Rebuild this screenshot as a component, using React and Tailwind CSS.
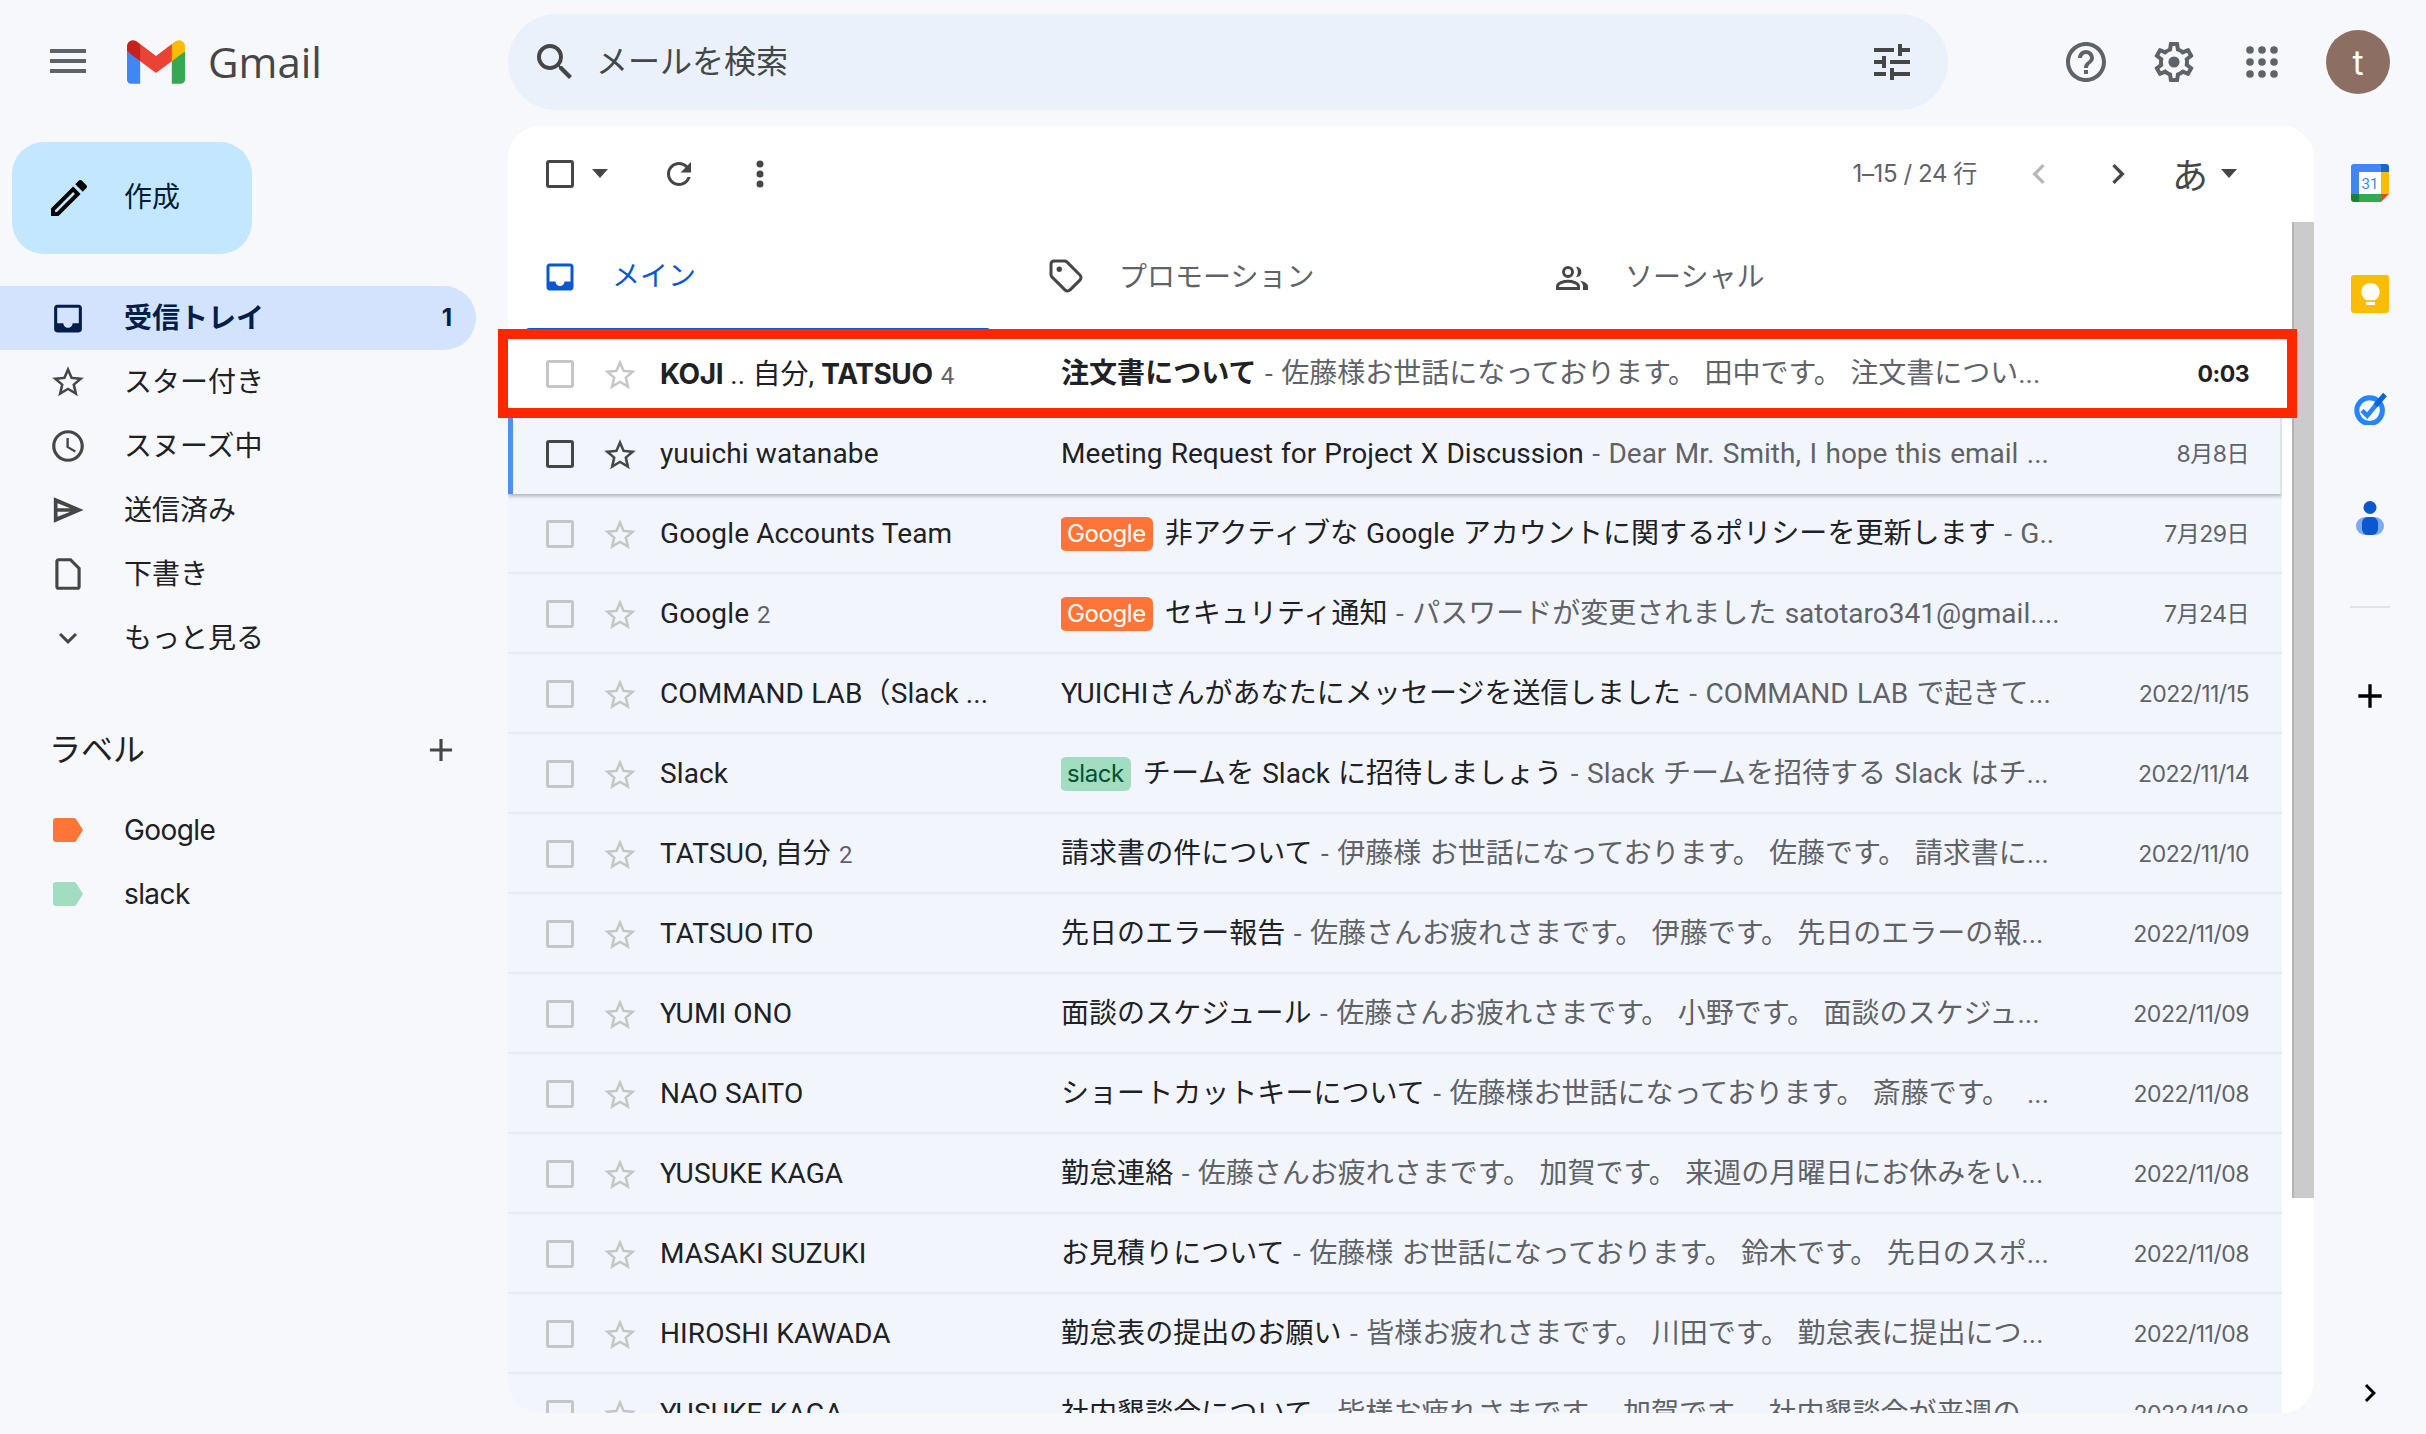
import React from "react";

const paths = {
  menu: "M3 18h18v-2H3v2zm0-5h18v-2H3v2zm0-7v2h18V6H3z",
  search: "M15.5 14h-.79l-.28-.27A6.471 6.471 0 0 0 16 9.5 6.5 6.5 0 1 0 9.5 16c1.61 0 3.09-.59 4.23-1.57l.27.28v.79l5 4.99L20.49 19l-4.99-5zm-6 0C7.01 14 5 11.99 5 9.5S7.01 5 9.5 5 14 7.01 14 9.5 11.99 14 9.5 14z",
  tune: "M3 17v2h6v-2H3zM3 5v2h10V5H3zm10 16v-2h8v-2h-8v-2h-2v6h2zM7 9v2H3v2h4v2h2V9H7zm14 4v-2H11v2h10zm-6-4h2V7h4V5h-4V3h-2v6z",
  help: "M11 18h2v-2h-2v2zm1-16C6.48 2 2 6.48 2 12s4.48 10 10 10 10-4.48 10-10S17.52 2 12 2zm0 18c-4.41 0-8-3.59-8-8s3.59-8 8-8 8 3.59 8 8-3.59 8-8 8zm0-14c-2.21 0-4 1.79-4 4h2c0-1.1.9-2 2-2s2 .9 2 2c0 2-3 1.75-3 5h2c0-2.25 3-2.5 3-5 0-2.21-1.79-4-4-4z",
  gear: "M19.43 12.98c.04-.32.07-.64.07-.98 0-.34-.03-.66-.07-.98l2.11-1.65c.19-.15.24-.42.12-.64l-2-3.46c-.09-.16-.26-.25-.44-.25-.06 0-.12.01-.17.03l-2.49 1c-.52-.4-1.08-.73-1.69-.98l-.38-2.65C14.46 2.18 14.25 2 14 2h-4c-.25 0-.46.18-.49.42l-.38 2.65c-.61.25-1.17.59-1.69.98l-2.49-1c-.06-.02-.12-.03-.18-.03-.17 0-.34.09-.43.25l-2 3.46c-.13.22-.07.49.12.64l2.11 1.65c-.04.32-.07.65-.07.98 0 .33.03.66.07.98l-2.11 1.65c-.19.15-.24.42-.12.64l2 3.46c.09.16.26.25.44.25.06 0 .12-.01.17-.03l2.49-1c.52.4 1.08.73 1.69.98l.38 2.65c.03.24.24.42.49.42h4c.25 0 .46-.18.49-.42l.38-2.65c.61-.25 1.17-.59 1.69-.98l2.49 1c.06.02.12.03.18.03.17 0 .34-.09.43-.25l2-3.46c.12-.22.07-.49-.12-.64l-2.11-1.65zm-1.98-1.71c.04.31.05.52.05.73 0 .21-.02.43-.05.73l-.14 1.13.89.7 1.08.84-.7 1.21-1.27-.51-1.04-.42-.9.68c-.43.32-.84.56-1.25.73l-1.06.43-.16 1.13-.2 1.35h-1.4l-.19-1.35-.16-1.13-1.06-.43c-.43-.18-.83-.41-1.23-.71l-.91-.7-1.06.43-1.27.51-.7-1.21 1.08-.84.89-.7-.14-1.13c-.03-.31-.05-.54-.05-.74s.02-.43.05-.73l.14-1.13-.89-.7-1.08-.84.7-1.21 1.27.51 1.04.42.9-.68c.43-.32.84-.56 1.25-.73l1.06-.43.16-1.13.2-1.35h1.39l.19 1.35.16 1.13 1.06.43c.43.18.83.41 1.23.71l.91.7 1.06-.43 1.27-.51.7 1.21-1.07.85-.89.7.14 1.13zM12 9.2a2.8 2.8 0 1 0 0 5.6 2.8 2.8 0 0 0 0-5.6z",
  pencil: "M3 17.25V21h3.75L17.81 9.94l-3.75-3.75L3 17.25zM5.92 19H5v-.92l9.06-9.06.92.92L5.92 19zM20.71 5.63l-2.34-2.34c-.2-.2-.45-.29-.71-.29s-.51.1-.7.29l-1.83 1.83 3.75 3.75 1.83-1.83c.39-.39.39-1.02 0-1.41z",
  inbox: "M19 3H4.99C3.89 3 3 3.9 3 5l.01 14c0 1.1.89 2 1.99 2h14c1.1 0 2-.9 2-2V5c0-1.1-.9-2-2-2zm0 12h-4c0 1.66-1.35 3-3 3s-3-1.34-3-3H5V5h14v10z",
  star: "M22 9.24l-7.19-.62L12 2 9.19 8.63 2 9.24l5.46 4.73L5.82 21 12 17.27 18.18 21l-1.63-7.03L22 9.24zM12 15.4l-3.76 2.27 1-4.28-3.32-2.88 4.38-.38L12 6.1l1.71 4.04 4.38.38-3.32 2.88 1 4.28L12 15.4z",
  clock: "M11.99 2C6.47 2 2 6.48 2 12s4.47 10 9.99 10C17.52 22 22 17.52 22 12S17.52 2 11.99 2zM12 20c-4.42 0-8-3.58-8-8s3.58-8 8-8 8 3.58 8 8-3.58 8-8 8zm.5-13H11v6l5.25 3.15.75-1.23-4.5-2.67z",
  send: "M2 3 L23 12 L2 21 Z M4.6 7.2 V10.7 H13.6 Z M4.6 13.3 V16.8 L13.6 13.3 Z",
  file: "M14 2H6c-1.1 0-2 .9-2 2v16c0 1.1.9 2 2 2h12c1.1 0 2-.9 2-2V8l-6-6zm4 18H6V4h7.17L18 8.83V20z",
  chevronDown: "M7.41 8.59 12 13.17l4.59-4.58L18 10l-6 6-6-6z",
  chevronLeft: "M15.41 7.41 14 6l-6 6 6 6 1.41-1.41L10.83 12z",
  chevronRight: "M8.59 16.59 10 18l6-6-6-6-1.41 1.41L13.17 12z",
  plus: "M19 13h-6v6h-2v-6H5v-2h6V5h2v6h6v2z",
  refresh: "M17.65 6.35C16.2 4.9 14.21 4 12 4c-4.42 0-7.99 3.58-7.99 8s3.57 8 7.99 8c3.73 0 6.84-2.55 7.73-6h-2.08c-.82 2.33-3.04 4-5.65 4-3.31 0-6-2.69-6-6s2.69-6 6-6c1.66 0 3.14.69 4.22 1.78L13 11h7V4l-2.35 2.35z",
};

function Icon({ d, className }) {
  return (
    <svg viewBox="0 0 24 24" fill="currentColor" fillRule="evenodd" className={className}>
      <path d={d} />
    </svg>
  );
}

function Caret({ className }) {
  return (
    <svg viewBox="0 0 16 10" fill="currentColor" className={className}>
      <path d="M0 0h16L8 9z" />
    </svg>
  );
}

function GmailLogo() {
  return (
    <svg viewBox="0 0 256 193" className="w-[58px] h-[44px]">
      <path fill="#4285F4" d="M58.182 192.05V93.14L27.507 65.077 0 49.504v125.091c0 9.658 7.825 17.455 17.455 17.455h40.727Z" />
      <path fill="#34A853" d="M197.818 192.05h40.727c9.659 0 17.455-7.826 17.455-17.455V49.505l-31.156 17.837-27.026 25.798v98.91Z" />
      <path fill="#EA4335" d="m58.182 93.14-4.174-38.647 4.174-36.989L128 69.868l69.818-52.364 4.669 34.992-4.669 40.644L128 145.504z" />
      <path fill="#FBBC04" d="M197.818 17.504V93.14L256 49.504V26.231c0-21.585-24.64-33.89-41.89-20.945l-16.292 12.218Z" />
      <path fill="#C5221F" d="M0 49.504l26.759 20.07L58.182 93.14V17.504L41.89 5.286C24.61-7.66 0 4.646 0 26.23v23.273Z" />
    </svg>
  );
}

function Apps() {
  return (
    <svg viewBox="0 0 32 32" fill="currentColor" className="w-[32px] h-[32px]">
      {[4, 16, 28].map((y) =>
        [4, 16, 28].map((x) => <circle key={`${x}-${y}`} cx={x} cy={y} r="3.8" />)
      )}
    </svg>
  );
}

function CalendarIcon() {
  return (
    <svg viewBox="0 0 38 38" className="w-[38px] h-[38px]">
      <path fill="#4285f4" d="M3 0h26l1 8H8v22l-8 1V3a3 3 0 0 1 3-3z" />
      <path fill="#1967d2" d="M29 0h6a3 3 0 0 1 3 3v5h-8z" />
      <path fill="#fbbc04" d="M30 8h8v22h-8z" />
      <path fill="#34a853" d="M8 30h22v8H8z" />
      <path fill="#188038" d="M0 30h8v8H3a3 3 0 0 1-3-3z" />
      <path fill="#ea4335" d="M30 30h8l-8 8z" />
      <rect x="8" y="8" width="22" height="22" fill="#fff" />
      <text x="19" y="25" textAnchor="middle" fontSize="15" fill="#4285f4" fontFamily="Roboto, sans-serif">31</text>
    </svg>
  );
}

function KeepIcon() {
  return (
    <svg viewBox="0 0 38 38" className="w-[38px] h-[38px]">
      <rect width="38" height="38" rx="3" fill="#fbbc04" />
      <path fill="#fff" d="M19.5 8a9 9 0 0 0-4.7 16.7c.2.2.2.4.2.6h9c0-.2 0-.4.2-.6A9 9 0 0 0 19.5 8z" />
      <rect x="15" y="27" width="9" height="3" fill="#fff" />
    </svg>
  );
}

function TasksIcon() {
  return (
    <svg viewBox="0 0 36 36" className="w-[36px] h-[36px]">
      <circle cx="17.6" cy="21.6" r="12.8" fill="none" stroke="#2684fc" strokeWidth="5" />
      <path d="M10 21.5l5.2 5.2L24 16" fill="none" stroke="#2684fc" strokeWidth="4.5" />
      <path d="M23.5 16.5L33 5.5" fill="none" stroke="#0066da" strokeWidth="5" />
    </svg>
  );
}

function ContactsIcon() {
  return (
    <svg viewBox="0 0 28 34" className="w-[28px] h-[34px]">
      <circle cx="14" cy="6.5" r="6.5" fill="#0b57d0" />
      <rect x="0" y="16" width="28" height="18" rx="9" fill="#7baaf7" />
      <rect x="6" y="16" width="16" height="18" rx="6" fill="#0b57d0" />
    </svg>
  );
}

function PeopleIcon() {
  return (
    <svg viewBox="0 0 32 24" className="w-[32px] h-[24px] text-[#444746]">
      <circle cx="12" cy="6" r="4.5" fill="none" stroke="currentColor" strokeWidth="3" />
      <path d="M1.5 22.5v-2.2c0-3 6-5 10.5-5s10.5 2 10.5 5v2.2z" fill="none" stroke="currentColor" strokeWidth="3" />
      <path d="M20 .8c3.2 0 5.4 2.4 5.4 5.2s-2.2 5.2-5.4 5.2c1.2-1.500 1.800-3.200 1.800-5.200S21.200 2.300 20 .8z" fill="currentColor" />
      <path d="M24 14.800c4 .6 8 2.500 8 5.700V24h-5v-3.500c0-2.300-1.200-4.200-3-5.700z" fill="currentColor" />
    </svg>
  );
}

const navItems = [
  { label: "受信トレイ", d: paths.inbox, active: true, count: "1", size: "w-[37px] h-[37px]" },
  { label: "スター付き", d: paths.star, size: "w-[38px] h-[38px]" },
  { label: "スヌーズ中", d: paths.clock, size: "w-[38px] h-[38px]" },
  { label: "送信済み", d: paths.send, size: "w-[34px] h-[34px]" },
  { label: "下書き", d: paths.file, size: "w-[38px] h-[38px]" },
  { label: "もっと見る", d: paths.chevronDown, size: "w-[36px] h-[36px]" },
];

function Sidebar() {
  return (
    <aside className="w-[508px] shrink-0 pt-[16px]">
      <button className="ml-[12px] w-[240px] h-[112px] rounded-[32px] bg-[#c2e7ff] flex items-center pl-[33px] text-[#001d35]">
        <Icon d={paths.pencil} className="w-[48px] h-[48px] text-black" />
        <span className="ml-[31px] -mt-[2px] text-[28px]">作成</span>
      </button>
      <nav className="mt-[32px] w-[476px]">
        {navItems.map((item) => (
          <div
            key={item.label}
            className={`h-[64px] flex items-center pr-[24px] rounded-r-full ${
              item.active ? "bg-[#d3e3fd] text-[#041e49] font-bold" : "text-[#202124]"
            }`}
          >
            <div className={`w-[136px] pl-[68px] flex shrink-0 ${item.active ? "text-[#041e49]" : "text-[#444746]"}`}>
              <Icon d={item.d} className={`${item.size} -translate-x-1/2`} />
            </div>
            <span className="flex-1 -ml-[12px] text-[28px]">{item.label}</span>
            {item.count && <span className="text-[24px]">{item.count}</span>}
          </div>
        ))}
      </nav>
      <div className="mt-[48px] h-[64px] flex items-center justify-between pl-[49px] pr-[16px] w-[476px] text-[#202124]">
        <span className="text-[32px]">ラベル</span>
        <Icon d={paths.plus} className="w-[38px] h-[38px] text-[#444746]" />
      </div>
      <div className="mt-[16px] text-[#202124]">
        {[
          { name: "Google", color: "text-[#ff7537]" },
          { name: "slack", color: "text-[#a2dcc1]" },
        ].map((label) => (
          <div key={label.name} className="h-[64px] flex items-center pl-[53px]">
            <svg viewBox="0 0 30 24" fill="currentColor" className={`w-[30px] h-[24px] ${label.color}`}>
              <path d="M3 0h18c1 0 1.7.4 2.3 1.2L30 12l-6.7 10.800c-.6.8-1.3 1.200-2.300 1.200H3a3 3 0 0 1-3-3V3a3 3 0 0 1 3-3z" />
            </svg>
            <span className="ml-[41px] text-[28px] tracking-[-0.6px]">{label.name}</span>
          </div>
        ))}
      </div>
    </aside>
  );
}

function Toolbar() {
  return (
    <div className="h-[96px] flex items-center pl-[38px] pr-[45px] text-[#444746]">
      <div className="w-[28px] h-[28px] border-[3px] border-[#444746] rounded-[3px]" />
      <Caret className="ml-[18px] w-[16px] h-[10px]" />
      <Icon d={paths.refresh} className="ml-[53px] w-[36px] h-[36px]" />
      <svg viewBox="0 0 8 28" fill="currentColor" className="ml-[59px] w-[8px] h-[28px]">
        <circle cx="4" cy="4" r="3.5" />
        <circle cx="4" cy="14" r="3.5" />
        <circle cx="4" cy="24" r="3.5" />
      </svg>
      <span className="ml-auto text-[24px] tracking-[-0.4px] text-[#5f6368]">1–15 / 24 行</span>
      <Icon d={paths.chevronLeft} className="ml-[42px] w-[40px] h-[40px] text-[#b5b8bb]" />
      <Icon d={paths.chevronRight} className="ml-[39px] w-[40px] h-[40px]" />
      <span className="ml-[34px] mt-[3px] text-[36px]">あ</span>
      <Caret className="ml-[13px] w-[16px] h-[10px]" />
    </div>
  );
}

function Tabs() {
  return (
    <div className="h-[112px] flex pl-[18px] text-[28px] text-[#5f6368]">
      <div className="w-[504px] flex flex-col">
        <div className="flex-1 flex items-center pl-[20px] text-[#0b57d0]">
          <Icon d={paths.inbox} className="mt-[4px] w-[36px] h-[36px] -ml-[4px]" />
          <span className="ml-[34px] mt-[2px]">メイン</span>
        </div>
        <div className="w-[464px] h-[6px] bg-[#0b57d0] rounded-t-[3px]" />
      </div>
      <div className="w-[508px] flex items-start pt-[34px] pl-[18px]">
        <svg viewBox="0 0 24 24" fill="none" stroke="currentColor" strokeWidth="2" className="mt-[2px] w-[36px] h-[36px] text-[#444746]">
          <path d="M12.586 2.586A2 2 0 0 0 11.172 2H4a2 2 0 0 0-2 2v7.172a2 2 0 0 0 .586 1.414l8.704 8.704a2.426 2.426 0 0 0 3.42 0l6.58-6.58a2.426 2.426 0 0 0 0-3.42z" />
          <circle cx="7.5" cy="7.5" r=".8" fill="currentColor" />
        </svg>
        <span className="ml-[35px]">プロモーション</span>
      </div>
      <div className="flex items-start pt-[34px] pl-[18px]">
        <div className="mt-[10px]">
          <PeopleIcon />
        </div>
        <span className="ml-[37px]">ソーシャル</span>
      </div>
    </div>
  );
}

const mails = [
  { sender: <><b className="font-['Inter',sans-serif] tracking-[-0.4px]">KOJI</b> <span>..</span> 自分, <b className="font-['Inter',sans-serif] tracking-[-0.4px]">TATSUO</b></>, count: "4", subject: "注文書について", snippet: "佐藤様お世話になっております。 田中です。 注文書につい...", date: "0:03", unread: true },
  { sender: "yuuichi watanabe", subject: "Meeting Request for Project X Discussion", snippet: "Dear Mr. Smith, I hope this email ...", date: "8月8日", hovered: true },
  { sender: "Google Accounts Team", tag: "Google", subject: "非アクティブな Google アカウントに関するポリシーを更新します", snippet: "G..", date: "7月29日" },
  { sender: "Google", count: "2", tag: "Google", subject: "セキュリティ通知", snippet: "パスワードが変更されました satotaro341@gmail....", date: "7月24日" },
  { sender: "COMMAND LAB（Slack ...", subject: "YUICHIさんがあなたにメッセージを送信しました", snippet: "COMMAND LAB で起きて...", date: "2022/11/15" },
  { sender: "Slack", tag: "slack", subject: "チームを Slack に招待しましょう", snippet: "Slack チームを招待する Slack はチ...", date: "2022/11/14" },
  { sender: "TATSUO, 自分", count: "2", subject: "請求書の件について", snippet: "伊藤様 お世話になっております。 佐藤です。 請求書に...", date: "2022/11/10" },
  { sender: "TATSUO ITO", subject: "先日のエラー報告", snippet: "佐藤さんお疲れさまです。 伊藤です。 先日のエラーの報...", date: "2022/11/09" },
  { sender: "YUMI ONO", subject: "面談のスケジュール", snippet: "佐藤さんお疲れさまです。 小野です。 面談のスケジュ...", date: "2022/11/09" },
  { sender: "NAO SAITO", subject: "ショートカットキーについて", snippet: "佐藤様お世話になっております。 斎藤です。  ...", date: "2022/11/08" },
  { sender: "YUSUKE KAGA", subject: "勤怠連絡", snippet: "佐藤さんお疲れさまです。 加賀です。 来週の月曜日にお休みをい...", date: "2022/11/08" },
  { sender: "MASAKI SUZUKI", subject: "お見積りについて", snippet: "佐藤様 お世話になっております。 鈴木です。 先日のスポ...", date: "2022/11/08" },
  { sender: "HIROSHI KAWADA", subject: "勤怠表の提出のお願い", snippet: "皆様お疲れさまです。 川田です。 勤怠表に提出につ...", date: "2022/11/08" },
  { sender: "YUSUKE KAGA", subject: "社内懇談会について", snippet: "皆様お疲れさまです。 加賀です。 社内懇談会が来週の...", date: "2022/11/08" },
];

function MailRow({ mail }) {
  const iconColor = mail.hovered ? "text-[#444746]" : "text-[#c4c7c5]";
  const boxColor = mail.hovered ? "border-[#444746]" : "border-[#c4c7c5]";
  const rowStyle = mail.hovered
    ? "bg-[#f2f6fc] border-l-[5px] border-l-[#4f8ff0] pl-[33px] pr-[31px] border-r-2 border-r-[#dfe3e8] shadow-[0_2px_4px_rgba(60,64,67,0.4)] relative"
    : mail.unread
      ? "bg-white pl-[38px] pr-[33px]"
      : "bg-[#f2f6fc] pl-[38px] pr-[33px] pt-[2px] border-b-2 border-[#e6ebf3]";

  return (
    <div className={`h-[80px] shrink-0 flex items-center text-[28px] text-[#202124] font-['Roboto','Noto_Sans_CJK_JP',sans-serif] ${rowStyle}`}>
      <div className={`w-[28px] h-[28px] shrink-0 border-[3px] rounded-[3px] ${boxColor}`} />
      <Icon d={paths.star} className={`ml-[27px] mt-[2px] w-[38px] h-[38px] shrink-0 ${iconColor}`} />
      <div className="ml-[21px] w-[401px] shrink-0 whitespace-nowrap overflow-hidden tracking-[0.12px]">
        {mail.sender}
        {mail.count && <span className="ml-[8px] text-[24px] text-[#5f6368]">{mail.count}</span>}
      </div>
      <div className="flex-1 min-w-0 flex items-center whitespace-pre overflow-hidden">
        {mail.tag && (
          <span
            className={`mr-[12px] -ml-[1px] px-[7px] h-[34px] flex items-center rounded-[6px] text-[24px] tracking-[-0.4px] font-['Inter',sans-serif] ${
              mail.tag === "Google" ? "bg-[#ff7537] text-white" : "bg-[#a2dcc1] text-[#04502f]"
            }`}
          >
            {mail.tag}
          </span>
        )}
        <span className={`tracking-[0.05px] [word-spacing:1px] ${mail.unread ? "font-bold" : ""}`}>{mail.subject}</span>
        <span className="text-[#5f6368] [word-spacing:1.5px]"> - {mail.snippet}</span>
      </div>
      <div className={`ml-[30px] shrink-0 text-[23px] tracking-[-0.5px] font-['Inter','Noto_Sans_CJK_JP',sans-serif] ${mail.unread ? "font-bold text-[#202124]" : "text-[#5f6368]"}`}>
        {mail.date}
      </div>
    </div>
  );
}

export default function App() {
  return (
    <div className="relative w-[2426px] h-[1434px] overflow-hidden flex flex-col bg-[#f6f8fc] font-['Inter','Noto_Sans_CJK_JP',sans-serif]">
      <header className="h-[126px] shrink-0 flex">
        <div className="w-[508px] shrink-0 flex items-start pt-[37px] pl-[44px]">
          <Icon d={paths.menu} className="w-[48px] h-[48px] text-[#5f6368]" />
          <div className="ml-[35px] mt-[3px]">
            <GmailLogo />
          </div>
          <span className="ml-[23px] text-[42px] leading-[50px] text-[#444746] font-['Open_Sans',sans-serif]">Gmail</span>
        </div>
        <div className="mt-[14px] w-[1440px] h-[96px] rounded-full bg-[#eaf1fb] flex items-center pl-[22px] pr-[32px] text-[#444746]">
          <Icon d={paths.search} className="ml-[1px] w-[48px] h-[48px]" />
          <span className="ml-[17px] flex-1 text-[32px]">メールを検索</span>
          <Icon d={paths.tune} className="w-[48px] h-[48px] text-[#444746]" />
        </div>
        <div className="flex-1 h-[124px] flex items-center text-[#5f6368]">
          <Icon d={paths.help} className="ml-[114px] w-[48px] h-[48px]" />
          <Icon d={paths.gear} className="ml-[40px] w-[48px] h-[48px]" />
          <div className="ml-[48px]">
            <Apps />
          </div>
          <div className="ml-[48px] w-[64px] h-[64px] rounded-full bg-[#8d6e63] text-white text-[34px] flex items-center justify-center">
            t
          </div>
        </div>
      </header>

      <div className="flex-1 min-h-0 flex">
        <Sidebar />
        <main className="w-[1806px] h-[1287px] shrink-0 flex bg-white rounded-[32px] overflow-hidden">
          <div className="w-[1784px] flex flex-col min-h-0 pr-[10px]">
            <Toolbar />
            <Tabs />
            <div className="flex-1 min-h-0 flex flex-col overflow-hidden">
              {mails.map((mail, i) => (
                <MailRow key={i} mail={mail} />
              ))}
            </div>
          </div>
          <div className="w-[22px] pt-[96px]">
            <div className="h-[976px] bg-[#cbcbcb] border-l-2 border-[#b4b4b4]" />
          </div>
        </main>
        <aside className="flex-1 flex flex-col items-center pt-[38px]">
          <CalendarIcon />
          <div className="mt-[73px]"><KeepIcon /></div>
          <div className="mt-[76px]"><TasksIcon /></div>
          <div className="mt-[76px]"><ContactsIcon /></div>
          <div className="mt-[71px] w-[40px] h-[2px] bg-[#e1e3e6]" />
          <Icon d={paths.plus} className="mt-[68px] w-[40px] h-[40px] text-black" />
          <Icon d={paths.chevronRight} className="mt-auto mb-[23px] w-[36px] h-[36px] text-black" />
        </aside>
      </div>

      <div className="absolute left-[498px] top-[329px] w-[1799px] h-[89px] border-[10px] border-[#ff2600]" />
    </div>
  );
}
